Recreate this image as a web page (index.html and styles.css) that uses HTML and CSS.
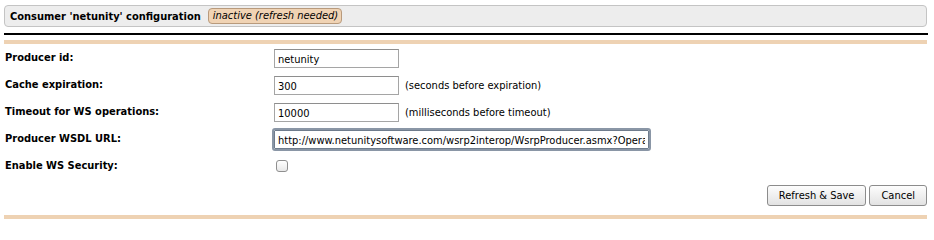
FILE: index.html
```html
<!DOCTYPE html>
<html>
<head>
<meta charset="utf-8">
<link rel="stylesheet" href="styles.css">
</head>
<body>
<div class="page">
  <div class="header">
    <span class="title">Consumer 'netunity' configuration</span>
    <span class="badge">inactive (refresh needed)</span>
  </div>
  <div class="rule"></div>
  <div class="bar"></div>
  <div class="form">
    <div class="row">
      <label class="label">Producer id:</label>
      <div class="field"><input class="text" type="text" value="netunity"></div>
    </div>
    <div class="row">
      <label class="label">Cache expiration:</label>
      <div class="field"><input class="text" type="text" value="300"><span class="hint">(seconds before expiration)</span></div>
    </div>
    <div class="row">
      <label class="label">Timeout for WS operations:</label>
      <div class="field"><input class="text" type="text" value="10000"><span class="hint">(milliseconds before timeout)</span></div>
    </div>
    <div class="row">
      <label class="label">Producer WSDL URL:</label>
      <div class="field"><input class="text url" type="text" value="http://www.netunitysoftware.com/wsrp2interop/WsrpProducer.asmx?Operation=WSDL&amp;WsdlVersion=2"></div>
    </div>
    <div class="row">
      <label class="label">Enable WS Security:</label>
      <div class="field"><span class="check"></span></div>
    </div>
  </div>
  <div class="actions">
    <button class="btn">Refresh &amp; Save</button>
    <button class="btn">Cancel</button>
  </div>
  <div class="bar bottom"></div>
</div>
</body>
</html>
```
FILE: styles.css
```css
html, body {
  margin: 0;
  padding: 0;
  background: #fff;
}
body {
  font-family: "DejaVu Sans Condensed", "DejaVu Sans", Verdana, sans-serif;
  font-size: 11px;
  color: #000;
}
.page {
  padding: 5px 7px 0 4px;
}
.header {
  height: 20px;
  border: 1px solid #c4c4c4;
  border-radius: 4px;
  background: #ededed;
  display: flex;
  align-items: center;
  padding-left: 5px;
}
.title {
  font-weight: bold;
  font-size: 11px;
}
.badge {
  margin-left: 7px;
  height: 14px;
  line-height: 14px;
  padding: 0 3px 0 4px;
  border: 1px solid #b89a7c;
  border-radius: 4px;
  background: #f0d3b4;
  font-style: italic;
  font-size: 11px;
}
.rule {
  margin-top: 6px;
  height: 2px;
  background: #000;
  margin-right: -1px;
}
.bar {
  margin-top: 5px;
  height: 4px;
  background: #eed2b3;
}
.form {
  padding-top: 1px;
}
.row {
  display: grid;
  grid-template-columns: 270px 1fr;
  align-items: center;
  height: 27px;
}
.label {
  font-weight: bold;
  padding-left: 1px;
  padding-bottom: 2px;
}
.field {
  display: flex;
  align-items: center;
}
.text {
  box-sizing: border-box;
  width: 125px;
  height: 19px;
  border: 1px solid #a5a5a5;
  border-top-color: #8e8e8e;
  padding: 1px 3px 0;
  font-family: "DejaVu Sans Condensed", "DejaVu Sans", sans-serif;
  font-size: 11px;
  color: #000;
  margin: 0;
}
.url {
  width: 375px;
  outline: 2px solid #8a96a6;
  outline-offset: 0;
  border-color: #6f7c8d;
  border-radius: 1px;
}
.hint {
  margin-left: 6px;
  font-size: 11px;
}
.check {
  display: inline-block;
  box-sizing: border-box;
  width: 12px;
  height: 12px;
  margin-left: 2px;
  margin-bottom: 2px;
  border: 1px solid #8f8f8f;
  border-radius: 3px;
  background: linear-gradient(#fff, #e8e8e8);
}
.actions {
  display: flex;
  justify-content: flex-end;
  gap: 3px;
  margin-top: 5px;
}
.btn {
  height: 21px;
  padding: 0 11px;
  border: 1px solid #8c8c8c;
  border-radius: 3px;
  background: linear-gradient(#fdfdfd, #e2e2e2);
  font-family: "DejaVu Sans Condensed", "DejaVu Sans", sans-serif;
  font-size: 11px;
  color: #000;
  margin: 0;
}
.bottom {
  margin-top: 9px;
}
```
